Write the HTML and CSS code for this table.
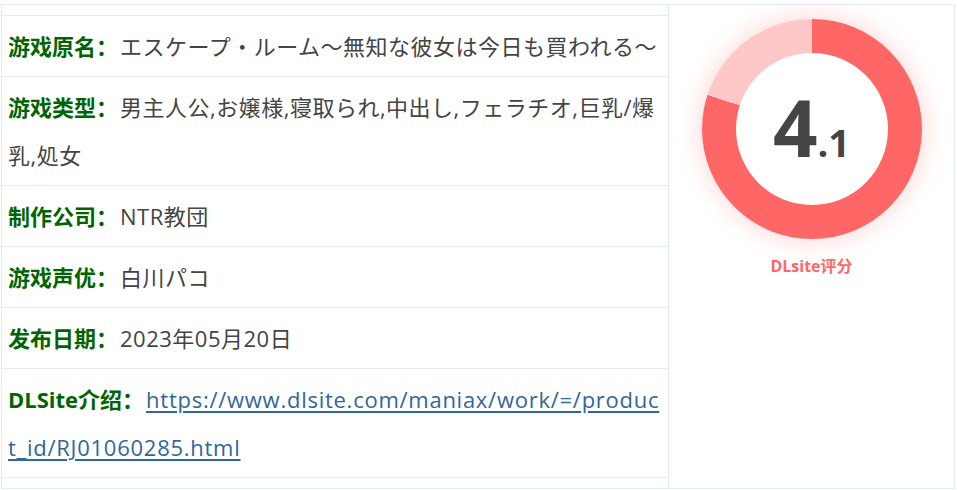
FILE: index.html
```html
<!DOCTYPE html>
<html lang="zh">
<head>
<meta charset="utf-8">
<link rel="stylesheet" href="styles.css">
</head>
<body>
<div class="card">
  <div class="info">
    <div class="row"><span class="label">游戏原名：</span><span class="value">エスケープ・ルーム～無知な彼女は今日も買われる～</span></div>
    <div class="row"><span class="label">游戏类型：</span><span class="value">男主人公,お嬢様,寝取られ,中出し,フェラチオ,巨乳/爆乳,処女</span></div>
    <div class="row"><span class="label">制作公司：</span><span class="value">NTR教団</span></div>
    <div class="row"><span class="label">游戏声优：</span><span class="value">白川パコ</span></div>
    <div class="row"><span class="label">发布日期：</span><span class="value">2023年05月20日</span></div>
    <div class="row"><span class="label">DLSite介绍：</span><a class="link" href="#">https://www.dlsite.com/maniax/work/=/product_id/RJ01060285.html</a></div>
  </div>
  <div class="score">
    <div class="donut">
      <div class="hole"><span class="big">4</span><span class="small">.1</span></div>
    </div>
    <div class="caption">DLsite评分</div>
  </div>
</div>
</body>
</html>
```
FILE: styles.css
```css
html, body {
  margin: 0;
  padding: 0;
  background: #fff;
}
body {
  padding: 4px 2px 0 1px;
  font-family: "Open Sans", "Noto Sans CJK SC", sans-serif;
  color: #444;
}
.card {
  display: flex;
  border: 1px solid #e3ecf5;
  height: 483px;
}
.info {
  width: 666px;
  border-right: 1px solid #e3ecf5;
  padding: 10px 0;
}
.row {
  border-top: 1px solid #e3ecf5;
  padding: 6px 6px 6px 6px;
  font-size: 22px;
  line-height: 48px;
  letter-spacing: 0.5px;
  word-break: break-all;
}
.row:last-child {
  border-bottom: 1px solid #e3ecf5;
}
.label {
  color: #006400;
  font-weight: 700;
  letter-spacing: 0;
  margin-right: 2px;
}
.value {
  color: #444;
}
.link {
  color: #33669a;
  text-decoration: underline;
  text-underline-offset: 3px;
  letter-spacing: 0.74px;
}
.score {
  flex: 1;
  display: flex;
  flex-direction: column;
  align-items: center;
  padding-top: 14px;
}
.donut {
  width: 220px;
  height: 220px;
  border-radius: 50%;
  background: conic-gradient(#ff6666 0 80%, #ffc8c8 80% 100%);
  box-shadow: 0 0 26px rgba(255, 102, 102, 0.3);
  display: flex;
  align-items: center;
  justify-content: center;
}
.hole {
  width: 152px;
  height: 152px;
  border-radius: 50%;
  background: #fff;
  display: flex;
  align-items: baseline;
  justify-content: center;
  padding-top: 4px;
  box-sizing: border-box;
  line-height: 140px;
  font-family: "Open Sans", sans-serif;
  font-weight: 700;
  color: #444;
}
.big {
  font-size: 78px;
}
.small {
  font-size: 38px;
}
.caption {
  margin-top: 17px;
  font-size: 16px;
  line-height: 20px;
  font-weight: 700;
  color: #ff6666;
  font-family: "Open Sans", "Noto Sans CJK SC", sans-serif;
}
```
